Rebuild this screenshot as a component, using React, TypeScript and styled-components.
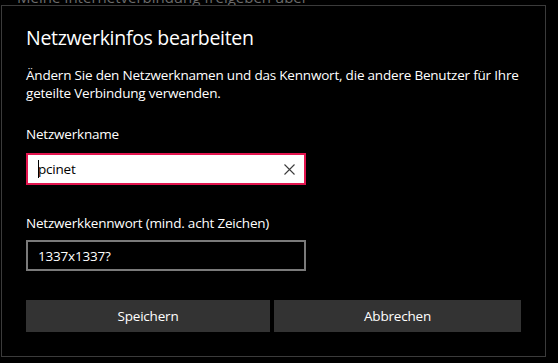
import styled, { createGlobalStyle } from 'styled-components';

const GlobalStyle = createGlobalStyle`
    html, body {
        margin: 0;
        padding: 0;
        background: #000;
    }
    body {
        font-family: "Open Sans", "Noto Sans", "Liberation Sans", sans-serif;
        color: #fff;
        width: 558px;
        height: 363px;
        overflow: hidden;
    }
`;

const Page = styled.div`
    display: flex;
    flex-direction: column;
    padding-left: 1px;
`;

/* the settings page behind the dialog, only its lower edge shows */
const Behind = styled.div`
    height: 5px;
    overflow: hidden;
    padding-left: 16px;
`;

const BehindText = styled.div`
    font-size: 15px;
    line-height: 20px;
    margin-top: -13px;
    color: #6b6b6b;
`;

const Dialog = styled.section`
    width: 545px;
    height: 352px;
    border: 1px solid #3b3b3b;
    background: #000;
    box-sizing: border-box;
    padding: 18px 23px 0 24px;
    display: flex;
    flex-direction: column;
`;

const Title = styled.h1`
    margin: 0;
    font-size: 19.5px;
    font-weight: 400;
    line-height: 28px;
    letter-spacing: -0.3px;
`;

const Intro = styled.p`
    margin: 14px 0 0;
    font-size: 13.5px;
    line-height: 18px;
    letter-spacing: -0.2px;
    white-space: nowrap;
`;

const Label = styled.label<{ $top: number }>`
    display: block;
    font-size: 13.5px;
    line-height: 20px;
    letter-spacing: -0.2px;
    margin-top: ${p => p.$top}px;
`;

const Field = styled.div<{ $focused?: boolean; $top: number }>`
    box-sizing: border-box;
    width: 280px;
    height: ${p => (p.$focused ? 32 : 31)}px;
    margin-top: ${p => p.$top}px;
    border: 2px solid ${p => (p.$focused ? '#e3154f' : '#7a7a7a')};
    background: ${p => (p.$focused ? '#fff' : '#000')};
    color: ${p => (p.$focused ? '#000' : '#fff')};
    display: flex;
    align-items: center;
    padding: 0 8px 0 10px;
    font-size: 13.5px;
    letter-spacing: -0.2px;
`;

const Caret = styled.span`
    display: inline-block;
    width: 1px;
    height: 18px;
    background: #000;
    margin-right: -1px;
`;

const FieldText = styled.span`
    flex: 1;
    white-space: pre;
`;

const ClearBtn = styled.span`
    display: flex;
    width: 14px;
    height: 14px;
    align-items: center;
    justify-content: center;
`;

const Buttons = styled.div`
    display: grid;
    grid-template-columns: 244px 247px;
    gap: 4px;
    margin-top: 29px;
`;

const Btn = styled.button`
    height: 32px;
    border: none;
    background: #333;
    color: #fff;
    font-family: inherit;
    font-size: 13.5px;
    letter-spacing: -0.2px;
    padding: 0;
`;

const ClearIcon = () => (
    <svg width="11" height="11" viewBox="0 0 11 11">
        <path d="M0.5 0.5 L10.5 10.5 M10.5 0.5 L0.5 10.5" stroke="#3c3c3c" strokeWidth="1.1" fill="none" />
    </svg>
);

const App = () => {
    return (
        <>
            <GlobalStyle />
            <Page>
                <Behind>
                    <BehindText>Meine Internetverbindung freigeben über</BehindText>
                </Behind>
                <Dialog>
                    <Title>Netzwerkinfos bearbeiten</Title>
                    <Intro>
                        Ändern Sie den Netzwerknamen und das Kennwort, die andere Benutzer für Ihre<br />
                        geteilte Verbindung verwenden.
                    </Intro>
                    <Label $top={22}>Netzwerkname</Label>
                    <Field $focused $top={9}>
                        <Caret />
                        <FieldText>pcinet</FieldText>
                        <ClearBtn><ClearIcon /></ClearBtn>
                    </Field>
                    <Label $top={28}>Netzwerkkennwort (mind. acht Zeichen)</Label>
                    <Field $top={7}>
                        <FieldText>1337x1337?</FieldText>
                    </Field>
                    <Buttons>
                        <Btn>Speichern</Btn>
                        <Btn>Abbrechen</Btn>
                    </Buttons>
                </Dialog>
            </Page>
        </>
    );
};

export default App;
